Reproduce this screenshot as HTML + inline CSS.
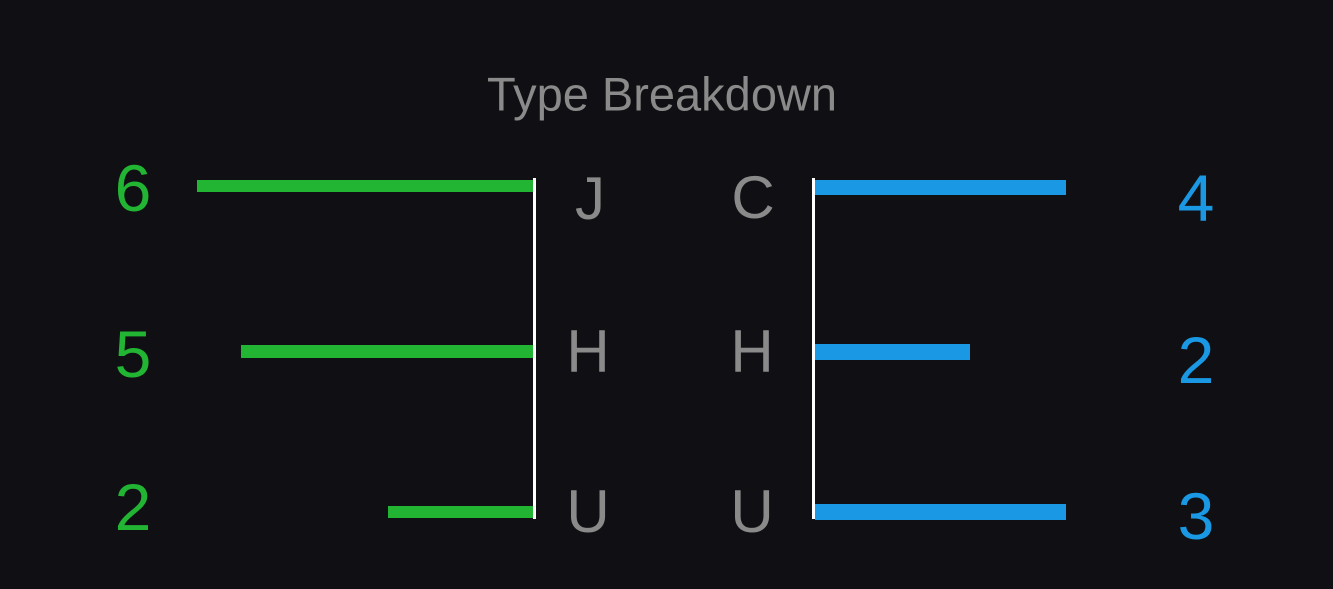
<!DOCTYPE html>
<html><head><style>
body{margin:0;width:1333px;height:589px;background:#101014;position:relative;overflow:hidden;font-family:"Liberation Sans",sans-serif}
.t{position:absolute;transform:translate(-50%,-50%);line-height:1;white-space:nowrap}
.g{color:#22b533;font-size:66px}
.b{color:#1a98e4;font-size:66px}
.l{color:#8a8a8a;font-size:60px}
.bar{position:absolute}
</style></head><body>
<div class="t" style="left:662px;top:94px;font-size:47px;color:#8a8a8a">Type Breakdown</div>
<div class="bar" style="left:533px;top:178px;width:3px;height:341px;background:#fff"></div>
<div class="bar" style="left:812px;top:178px;width:3px;height:341px;background:#fff"></div>
<div class="bar" style="left:197px;top:180px;width:336px;height:12px;background:#22b533"></div>
<div class="bar" style="left:241px;top:345px;width:292px;height:13px;background:#22b533"></div>
<div class="bar" style="left:388px;top:506px;width:145px;height:12px;background:#22b533"></div>
<div class="bar" style="left:815px;top:180px;width:251px;height:15px;background:#1a98e4"></div>
<div class="bar" style="left:815px;top:344px;width:155px;height:16px;background:#1a98e4"></div>
<div class="bar" style="left:815px;top:504px;width:251px;height:16px;background:#1a98e4"></div>
<div class="t g" style="left:133px;top:188px">6</div>
<div class="t g" style="left:133px;top:354px">5</div>
<div class="t g" style="left:133px;top:507px">2</div>
<div class="t b" style="left:1196px;top:198px">4</div>
<div class="t b" style="left:1196px;top:360px">2</div>
<div class="t b" style="left:1196px;top:516px">3</div>
<div class="t l" style="left:590px;top:199px">J</div>
<div class="t l" style="left:588px;top:352px">H</div>
<div class="t l" style="left:588px;top:512px">U</div>
<div class="t l" style="left:753px;top:198px">C</div>
<div class="t l" style="left:752px;top:352px">H</div>
<div class="t l" style="left:752px;top:512px">U</div>
</body></html>
